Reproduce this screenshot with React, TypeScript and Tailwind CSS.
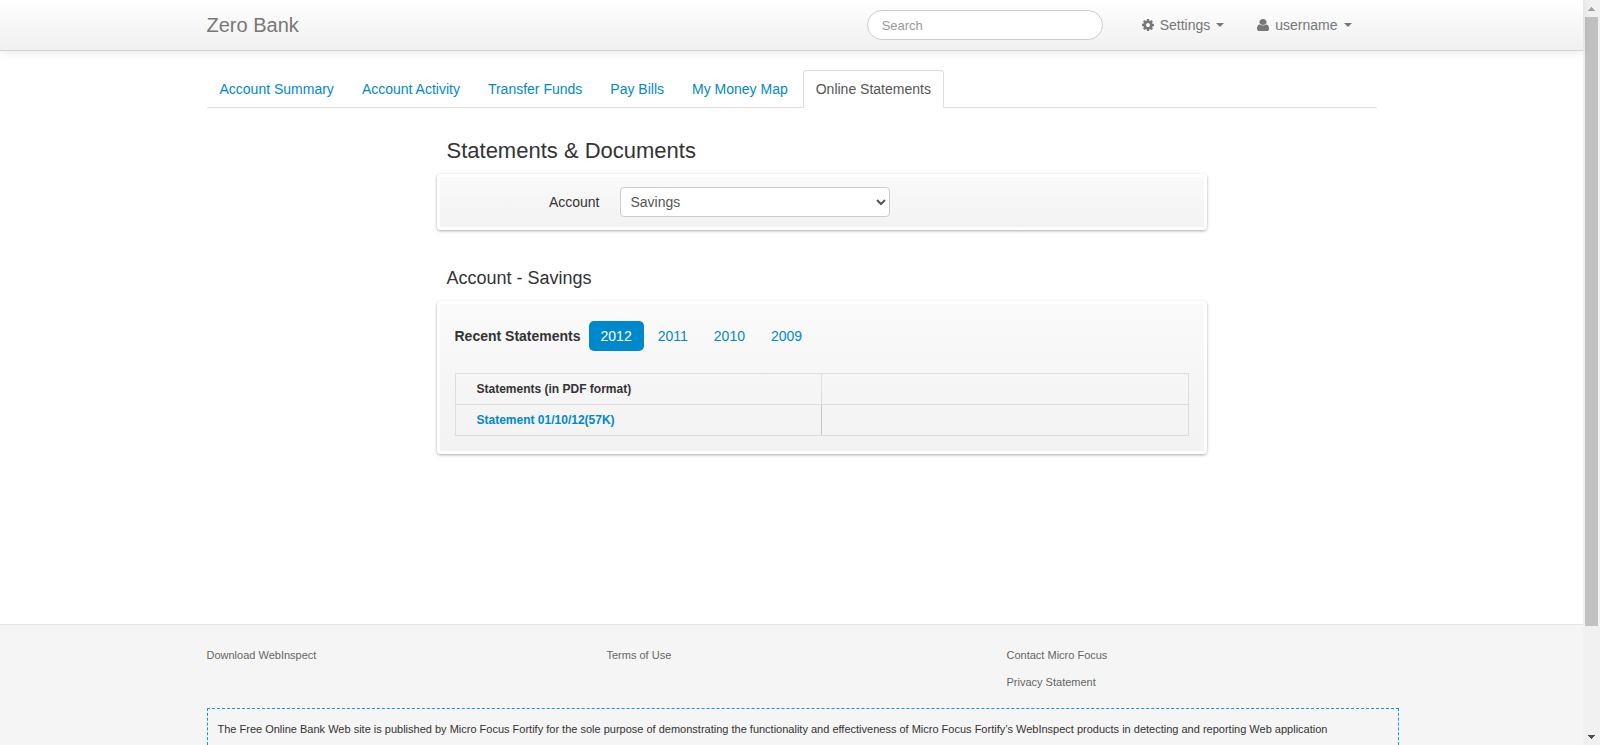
import React from "react";

const tabs = [
  "Account Summary",
  "Account Activity",
  "Transfer Funds",
  "Pay Bills",
  "My Money Map",
  "Online Statements",
];

const years = ["2012", "2011", "2010", "2009"];

const footerColumns = [
  ["Download WebInspect"],
  ["Terms of Use"],
  ["Contact Micro Focus", "Privacy Statement"],
];

function CogIcon() {
  return (
    <svg viewBox="0 128 1536 1536" className="size-3 fill-current" aria-hidden="true">
      <path d="M1024 896q0-106-75-181t-181-75-181 75-75 181 75 181 181 75 181-75 75-181zm512-109v222q0 12-8 23t-20 13l-185 28q-19 54-39 91 35 50 107 138 10 12 10 25t-9 23q-27 37-99 108t-94 71q-12 0-26-9l-138-108q-44 23-91 38-16 136-29 186-7 28-36 28h-222q-14 0-24.5-8.5t-11.5-21.5l-28-184q-49-16-90-37l-141 107q-10 9-25 9-14 0-25-11-126-114-165-168-7-10-7-23 0-12 8-23 15-21 51-66.5t54-70.5q-27-50-41-99l-183-27q-13-2-21-12.5t-8-23.5v-222q0-12 8-23t19-13l186-28q14-46 39-92-40-57-107-138-10-12-10-24 0-10 9-23 26-36 98.5-107.5t94.5-71.5q13 0 26 10l138 107q44-23 91-38 16-136 29-186 7-28 36-28h222q14 0 24.5 8.5t11.5 21.5l28 184q49 16 90 37l142-107q9-9 24-9 13 0 25 10 129 119 165 170 7 8 7 22 0 12-8 23-15 21-51 66.5t-54 70.5q26 50 41 98l183 28q13 2 21 12.5t8 23.5z" />
    </svg>
  );
}

function UserIcon() {
  return (
    <svg viewBox="256 128 1280 1536" className="h-3 w-3 fill-current" preserveAspectRatio="none" aria-hidden="true">
      <path d="M1536 1399q0 109-62.5 187t-150.5 78h-854q-88 0-150.5-78t-62.5-187q0-85 8.5-160.5t31.5-152 58.5-131 94-89 134.5-34.5q131 128 313 128t313-128q76 0 134.5 34.5t94 89 58.5 131 31.5 152 8.5 160.5zm-256-887q0 159-112.5 271.5t-271.5 112.5-271.5-112.5-112.5-271.5 112.5-271.5 271.5-112.5 271.5 112.5 112.5 271.5z" />
    </svg>
  );
}

function Caret() {
  return (
    <svg viewBox="0 0 8 4" className="h-1 w-2 fill-current" aria-hidden="true">
      <path d="M0 0h8L4 4z" />
    </svg>
  );
}

function MenuButton({ icon, label }: { icon: React.ReactNode; label: string }) {
  return (
    <button type="button" className="flex items-center gap-1.5 text-sm leading-5 text-[#777]">
      {icon}
      <span>{label}</span>
      <Caret />
    </button>
  );
}

function Header() {
  return (
    <header className="relative border-b border-[#d4d4d4] bg-linear-to-b from-white to-[#f0f0f0] shadow-[0_1px_10px_rgba(0,0,0,0.1)]">
      <div className="mx-auto flex h-[50px] w-full max-w-[1170px] items-center justify-between">
        <a href="#" className="text-xl leading-5 text-[#777]">
          Zero Bank
        </a>
        <div className="flex items-center pr-[25px]">
          <input
            type="search"
            aria-label="Search"
            placeholder="Search"
            className="h-[30px] w-[236px] rounded-full border border-[#ccc] bg-white px-3.5 text-[13px] leading-4 placeholder:text-[#999]"
          />
          <nav className="ml-[39px] flex gap-[33px]" aria-label="User">
            <MenuButton icon={<CogIcon />} label="Settings" />
            <MenuButton icon={<UserIcon />} label="username" />
          </nav>
        </div>
      </div>
    </header>
  );
}

function Tabs() {
  return (
    <nav className="mt-[19px] border-b border-[#ddd]" aria-label="Accounts">
      <ul className="flex gap-0.5">
        {tabs.map((tab) => (
          <li key={tab} className="-mb-px">
            <a
              href="#"
              className={
                tab === "Online Statements"
                  ? "block rounded-t border border-[#ddd] border-b-white bg-white px-3 py-2 text-sm leading-5 text-[#555]"
                  : "block border border-transparent px-3 py-2 text-sm leading-5 text-[#08c]"
              }
            >
              {tab}
            </a>
          </li>
        ))}
      </ul>
    </nav>
  );
}

function Panel({ children }: { children: React.ReactNode }) {
  return (
    <div className="rounded border-[3px] border-white bg-linear-to-b from-[#fafafa] to-[#f2f2f2] bg-origin-border shadow-[0_1px_3px_rgba(0,0,0,0.35)]">
      {children}
    </div>
  );
}

function Statements() {
  return (
    <div className="ml-[230px] w-[770px]">
      <h2 className="mt-[23px] px-2.5 text-[22px] leading-10 text-[#333]">Statements &amp; Documents</h2>
      <div className="mt-[3px]">
        <Panel>
          <div className="flex items-center gap-5 py-2.5">
            <label htmlFor="account" className="w-40 text-right text-sm leading-5 text-[#333]">
              Account
            </label>
            <select
              id="account"
              className="h-[30px] w-[270px] rounded border border-[#ccc] bg-white px-1.5 text-sm leading-5 text-[#555]"
            >
              <option>Savings</option>
            </select>
          </div>
        </Panel>
      </div>

      <h3 className="mt-7 px-2.5 text-lg leading-10 text-[#333]">Account - Savings</h3>
      <div className="mt-[3px]">
        <Panel>
          <div className="px-[15px] pt-[17px] pb-[15px]">
            <div className="flex items-center gap-2">
              <strong className="text-sm leading-5 text-[#333]">Recent Statements</strong>
              <ul className="flex gap-0.5">
                {years.map((year) => (
                  <li key={year}>
                    <a
                      href="#"
                      className={
                        year === "2012"
                          ? "block rounded-[5px] bg-[#08c] px-3 py-[5px] text-sm leading-5 text-white"
                          : "block rounded-[5px] px-3 py-[5px] text-sm leading-5 text-[#08c]"
                      }
                    >
                      {year}
                    </a>
                  </li>
                ))}
              </ul>
            </div>
            <table className="mt-[22px] w-full table-fixed border-collapse border border-[#ddd] text-left text-xs leading-[30px]">
              <thead>
                <tr>
                  <th className="border border-[#ddd] px-[21px] py-0 font-bold text-[#333]">
                    Statements (in PDF format)
                  </th>
                  <td className="border border-[#ddd] p-0" />
                </tr>
              </thead>
              <tbody>
                <tr>
                  <td className="border border-[#ddd] border-r-[#c8c8c8] px-[21px] py-0 font-bold">
                    <a href="#" className="text-[#08c]">
                      Statement 01/10/12(57K)
                    </a>
                  </td>
                  <td className="border border-[#ddd] border-l-[#c8c8c8] p-0" />
                </tr>
              </tbody>
            </table>
          </div>
        </Panel>
      </div>
    </div>
  );
}

function Footer() {
  return (
    <footer className="border-t border-[#e5e5e5] bg-[#f5f5f5] text-[11px] leading-5">
      <div className="mx-auto w-full max-w-[1170px]">
        <div className="flex pt-5">
          {footerColumns.map((links) => (
            <ul key={links[0]} className="flex w-[400px] shrink-0 flex-col gap-[7px] last:w-auto">
              {links.map((link) => (
                <li key={link}>
                  <a href="#" className="block text-[#666]">
                    {link}
                  </a>
                </li>
              ))}
            </ul>
          ))}
        </div>
        <div className="-mr-[22px] mt-4 border border-b-0 border-dashed border-[#0c9bdc] px-2.5 pt-2.5 pb-1.5 text-[#333]">
          The Free Online Bank Web site is published by Micro Focus Fortify for the sole purpose of demonstrating the
          functionality and effectiveness of Micro Focus Fortify’s WebInspect products in detecting and reporting Web
          application
        </div>
      </div>
    </footer>
  );
}

function ScrollTrack() {
  return (
    <div className="flex w-[17px] shrink-0 flex-col items-center bg-[#f1f1f1]" aria-hidden="true">
      <div className="flex h-[17px] shrink-0 items-center">
        <svg viewBox="0 0 7 4" className="h-1 w-[7px] fill-[#a3a3a3]">
          <path d="M3 0h1v1h1v1h1v1h1v1H0V3h1V2h1V1h1z" />
        </svg>
      </div>
      <div className="flex w-[13px] flex-1 flex-col">
        <div className="h-6/7 bg-[#c1c1c1]" />
      </div>
      <div className="flex h-[17px] shrink-0 items-center">
        <svg viewBox="0 0 7 4" className="h-1 w-[7px] fill-[#505050]">
          <path d="M0 0h7v1H6v1H5v1H4v1H3V3H2V2H1V1H0z" />
        </svg>
      </div>
    </div>
  );
}

export default function App() {
  return (
    <div className="flex h-screen overflow-hidden bg-white font-['Liberation_Sans',Arial,sans-serif]">
      <div className="flex min-w-0 flex-1 flex-col">
        <Header />
        <main className="mx-auto w-full max-w-[1170px] flex-1">
          <Tabs />
          <Statements />
        </main>
        <Footer />
      </div>
      <ScrollTrack />
    </div>
  );
}
